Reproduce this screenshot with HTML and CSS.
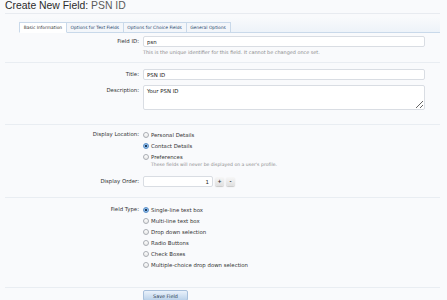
FILE: index.html
```html
<!DOCTYPE html>
<html>
<head>
<title>Create New Field: PSN ID</title>
<link rel="stylesheet" href="styles.css">
</head>
<body>

<!-- ====================================================== -->
<h1 class="title">Create New Field: <span class="title-sub">PSN ID</span></h1>

<!-- ====================================================== -->
<div class="tabs">
    <ul>
        <li class="active">Basic Information</li>
        <li>Options for Text Fields</li>
        <li>Options for Choice Fields</li>
        <li>General Options</li>
    </ul>
</div>

<!-- ====================================================== -->
<form class="form">

<div class="section sec-id">
    <div class="row">
        <label class="lbl">Field ID:</label>
        <div class="ctrl">
            <input class="text" type="text" value="psn">
            <p class="hint">This is the unique identifier for this field. It cannot be changed once set.</p>
        </div>
    </div>
</div>

<div class="section sec-title">
    <div class="row">
        <label class="lbl">Title:</label>
        <div class="ctrl"><input class="text" type="text" value="PSN ID"></div>
    </div>
    <div class="row row-desc">
        <label class="lbl">Description:</label>
        <div class="ctrl"><textarea class="text area">Your PSN ID</textarea></div>
    </div>
</div>

<div class="section sec-display">
    <div class="row">
        <label class="lbl lbl-list">Display Location:</label>
        <div class="ctrl">
            <ul class="choices">
                <li><input type="radio" name="loc"> Personal Details</li>
                <li><input type="radio" name="loc" checked> Contact Details</li>
                <li><input type="radio" name="loc"> Preferences</li>
            </ul>
            <p class="hint hint-pref">These fields will never be displayed on a user's profile.</p>
        </div>
    </div>
    <div class="row row-order">
        <label class="lbl">Display Order:</label>
        <div class="ctrl spin">
            <input class="text num" type="text" value="1">
            <span class="spin-btn">+</span>
            <span class="spin-btn">-</span>
        </div>
    </div>
</div>

<div class="section sec-type">
    <div class="row">
        <label class="lbl lbl-list">Field Type:</label>
        <div class="ctrl">
            <ul class="choices">
                <li><input type="radio" name="type" checked> Single-line text box</li>
                <li><input type="radio" name="type"> Multi-line text box</li>
                <li><input type="radio" name="type"> Drop down selection</li>
                <li><input type="radio" name="type"> Radio Buttons</li>
                <li><input type="radio" name="type"> Check Boxes</li>
                <li><input type="radio" name="type"> Multiple-choice drop down selection</li>
            </ul>
        </div>
    </div>
</div>

<div class="section sec-submit">
    <div class="row">
        <span class="lbl"></span>
        <div class="ctrl"><button class="save" type="button">Save Field</button></div>
    </div>
</div>

</form>

</body>
</html>
```

FILE: styles.css
```css
/*-----------------------------------------------------------------*/
body {
    margin:             0;
    background:         #f9fafc;
    color:              #333;
    font-family:        "DejaVu Sans", Verdana, sans-serif;
    font-size:          5.4px;
    overflow:           hidden;
}

/*-----------------------------------------------------------------*/
.title {
    margin:             0 7px 0 5px;
    height:             13px;
    font-family:        "Liberation Sans", Arial, sans-serif;
    font-size:          10.4px;
    line-height:        12px;
    font-weight:        normal;
    color:              #2b2b2b;
    border-bottom:      1px solid #e8ebf0;
}

.title-sub {
    color:              #5b5b5b;
}

/*-----------------------------------------------------------------*/
.tabs {
    margin:             3px 7px 0 19px;
    padding-top:        5px;
    background:         linear-gradient(#f9fafc, #edf3f9);
    border-bottom:      1px solid #c9d9ea;
}

.tabs ul {
    display:            flex;
    margin:             0;
    padding:            0;
    list-style:         none;
}

.tabs li {
    height:             9px;
    line-height:        9px;
    padding:            0 3.7px;
    margin-bottom:      -1px;
    font-size:          4.4px;
    color:              #2b4a6e;
    background:         #f3f6fa;
    border:             1px solid #c9d9ea;
    border-left:        none;
}

.tabs li:first-child {
    border-left:        1px solid #c9d9ea;
}

.tabs li.active {
    background:         #fff;
    border-bottom-color: #fff;
    color:              #333;
}

/*-----------------------------------------------------------------*/
.section {
    margin:             0 7px 0 5px;
    border-bottom:      1px solid #e9edf2;
}

.sec-id      { padding: 3px 0 7px 0; }
.sec-title   { padding: 6px 0 14px 0; }
.sec-display { padding: 4px 0 10px 0; }
.sec-type    { padding: 6px 0 17px 0; }
.sec-submit  { padding: 2px 0 0 0; border-bottom: none; }

.row {
    display:            grid;
    grid-template-columns: 134px 282px;
    column-gap:         4px;
    align-items:        start;
}

.row-desc  { margin-top: 5px; }
.row-order { margin-top: 9px; }

.lbl {
    text-align:         right;
    line-height:        11px;
    color:              #333;
}

.lbl-list {
    line-height:        11px;
}

/*-----------------------------------------------------------------*/
.text {
    display:            block;
    box-sizing:         border-box;
    width:              282px;
    height:             11px;
    margin:             0;
    padding:            0 3px;
    font-family:        inherit;
    font-size:          5.4px;
    color:              #222;
    background:         #fff;
    border:             1px solid #d9dde3;
    border-radius:      2px;
    outline:            none;
}

.area {
    height:             25px;
    padding-top:        2px;
    resize:             vertical;
}

.hint {
    margin:             2px 0 0 0;
    font-size:          4.9px;
    line-height:        6px;
    color:              #8c8c8c;
}

.hint-pref {
    margin:             0 0 0 8px;
    font-size:          4.6px;
    line-height:        5px;
}

/*-----------------------------------------------------------------*/
.choices {
    margin:             0;
    padding:            0;
    list-style:         none;
}

.choices li {
    display:            flex;
    align-items:        center;
    height:             11px;
    color:              #333;
}

.choices input {
    appearance:         none;
    -webkit-appearance: none;
    box-sizing:         border-box;
    width:              6px;
    height:             6px;
    margin:             0 2px 0 0;
    border:             1px solid #a9adb3;
    border-radius:      50%;
    background:         linear-gradient(#fff, #e8e8e8);
}

.choices input:checked {
    border-color:       #5a8fc8;
    background:         radial-gradient(circle, #1f3a5a 0 1px, #8fc0ee 1.3px);
}

/*-----------------------------------------------------------------*/
.spin {
    display:            flex;
    align-items:        center;
    gap:                2px;
}

.num {
    width:              70px;
    text-align:         right;
}

.spin-btn {
    width:              9px;
    height:             9px;
    line-height:        9px;
    text-align:         center;
    font-weight:        bold;
    font-size:          5px;
    background:         linear-gradient(#f7f7f7, #e0e0e0);
    border-radius:      2px;
    box-shadow:         0 1px 1px #c8c8c8;
}

/*-----------------------------------------------------------------*/
.save {
    width:              45px;
    height:             11px;
    padding:            0;
    font-family:        inherit;
    font-size:          4.9px;
    color:              #2a3b50;
    background:         linear-gradient(#eaf2fb, #bcd2ea);
    border:             1px solid #a8c0dc;
    border-radius:      2px;
}
```
